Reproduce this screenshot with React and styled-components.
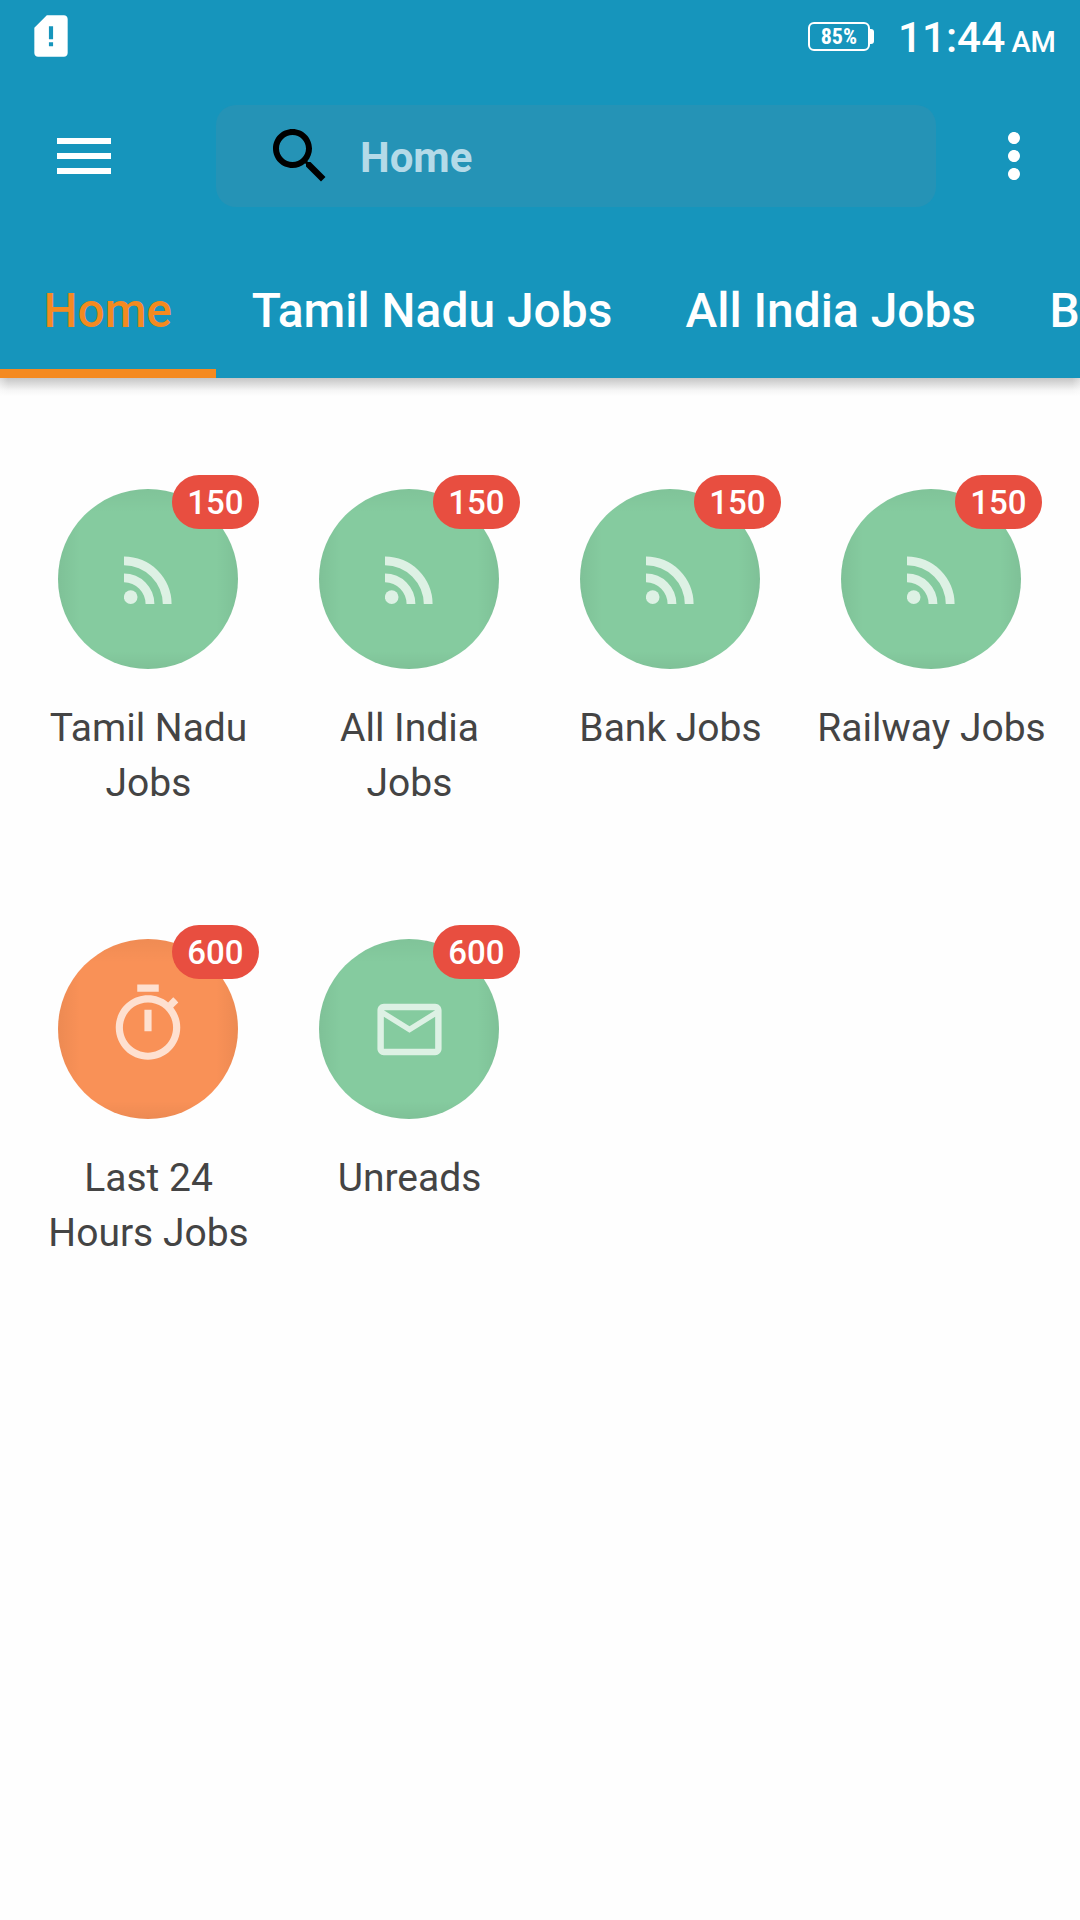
import React from 'react';
import styled, { createGlobalStyle } from 'styled-components';

const Global = createGlobalStyle`
  * { box-sizing: border-box; }
  body { margin: 0; background: #fefefe; font-family: Roboto, "Noto Sans", sans-serif; }
`;

const Screen = styled.div`
  width: 1080px;
  height: 1920px;
  overflow: hidden;
  background: #fefefe;
`;

const Header = styled.header`
  height: 378px;
  display: flex;
  flex-direction: column;
  background: #1695bc;
  color: #fff;
`;

const StatusBar = styled.div`
  height: 72px;
  padding: 0 24px 0 25.5px;
  display: flex;
  align-items: center;
  justify-content: space-between;
`;

const StatusRight = styled.div`
  display: flex;
  align-items: center;
`;

const Battery = styled.div`
  width: 62px;
  height: 29px;
  border: 2px solid #fff;
  border-radius: 6px;
  display: flex;
  align-items: center;
  justify-content: center;
  font: 700 22px/25px "Roboto Condensed", Roboto, sans-serif;
`;

const BatteryTip = styled.div`
  width: 4px;
  height: 15px;
  background: #fff;
  border-radius: 0 3px 3px 0;
`;

const Clock = styled.div`
  margin-left: 24px;
  padding-top: 8px;
  font-weight: 500;
  font-size: 42.3px;
  line-height: 68px;
  white-space: pre;
`;

const Meridiem = styled.span`
  margin-left: -1px;
  font-size: 29px;
`;

const Toolbar = styled.div`
  height: 168px;
  padding: 0 30px 0 48px;
  display: flex;
  align-items: center;
`;

const SearchField = styled.div`
  width: 720px;
  height: 102px;
  margin: 0 42px 0 96px;
  padding-left: 48px;
  border-radius: 20px;
  background: #2593b6;
  display: flex;
  align-items: center;
`;

const SearchText = styled.span`
  margin-left: 24px;
  padding-top: 2px;
  font-weight: 700;
  font-size: 42px;
  color: #b4dae8;
`;

const Tabs = styled.nav`
  flex: 1;
  display: flex;
  overflow: hidden;
`;

const Tab = styled.div`
  flex: none;
  width: ${(p) => p.$width}px;
  padding-top: 12px;
  display: flex;
  align-items: center;
  justify-content: center;
  border-bottom: 9px solid ${(p) => (p.$active ? '#f48a20' : 'transparent')};
  color: ${(p) => (p.$active ? '#f48a20' : '#fff')};
  font-weight: 500;
  font-size: 47.9px;
  white-space: nowrap;
`;

const Shadow = styled.div`
  height: 18px;
  background:
    linear-gradient(90deg, rgba(254, 254, 254, 0.4), rgba(254, 254, 254, 0) 8px, rgba(254, 254, 254, 0) 1072px, rgba(254, 254, 254, 0.4)),
    linear-gradient(#c6c6c6, #dedede 35%, #f5f5f5 68%, #fefefe);
`;

const Grid = styled.main`
  padding: 93px 0 0 17.5px;
  display: grid;
  grid-template-columns: repeat(4, 261px);
  grid-auto-rows: 450px;
`;

const Item = styled.div`
  display: flex;
  flex-direction: column;
  align-items: center;
`;

const Disc = styled.div`
  position: relative;
  width: 180px;
  height: 180px;
  padding-top: ${(p) => p.$drop || 0}px;
  padding-bottom: ${(p) => p.$lift || 0}px;
  border-radius: 50%;
  display: flex;
  align-items: center;
  justify-content: center;
  background:
    linear-gradient(90deg, rgba(0, 0, 0, 0.05), transparent 22px, transparent 158px, rgba(0, 0, 0, 0.05)),
    linear-gradient(rgba(0, 0, 0, 0.04), transparent 24px, transparent 162px, rgba(0, 0, 0, 0.05)),
    ${(p) => p.$color};
  color: rgba(255, 255, 255, 0.72);
`;

const Badge = styled.div`
  position: absolute;
  top: -14px;
  left: 114px;
  width: 87px;
  height: 54px;
  padding-top: 1px;
  border-radius: 27px;
  background: #e84e40;
  color: #fff;
  font-weight: 500;
  font-size: 33px;
  line-height: 54px;
  text-align: center;
`;

const Label = styled.div`
  width: ${(p) => p.$width}px;
  margin-top: 32px;
  padding-left: 1px;
  color: #444;
  font-size: 39px;
  line-height: 55px;
  text-align: center;
`;

const PATHS = {
  menu: 'M3 18h18v-2H3v2zm0-5h18v-2H3v2zm0-7v2h18V6H3z',
  search:
    'M15.5 14h-.79l-.28-.27C15.41 12.59 16 11.11 16 9.5 16 5.91 13.09 3 9.5 3S3 5.91 3 9.5 5.91 16 9.5 16c1.61 0 3.09-.59 4.23-1.57l.27.28v.79l5 4.99L20.49 19l-4.99-5zm-6 0C7.01 14 5 11.99 5 9.5S7.01 5 9.5 5 14 7.01 14 9.5 11.99 14 9.5 14z',
  more: 'M12 8c1.1 0 2-.9 2-2s-.9-2-2-2-2 .9-2 2 .9 2 2 2zm0 2c-1.1 0-2 .9-2 2s.9 2 2 2 2-.9 2-2-.9-2-2-2zm0 6c-1.1 0-2 .9-2 2s.9 2 2 2 2-.9 2-2-.9-2-2-2z',
  mail: 'M20 4H4c-1.1 0-1.99.9-1.99 2L2 18c0 1.1.9 2 2 2h16c1.1 0 2-.9 2-2V6c0-1.1-.9-2-2-2zm0 14H4V8l8 5 8-5v10zm-8-7L4 6h16l-8 5z',
  timer:
    'M15 1H9v2h6V1zm-4 13h2V8h-2v6zm8.03-6.61l1.42-1.42c-.43-.51-.9-.99-1.41-1.41l-1.42 1.42C16.07 4.74 14.12 4 12 4c-4.97 0-9 4.03-9 9s4.02 9 9 9 9-4.03 9-9c0-2.12-.74-4.07-1.97-5.61zM12 20c-3.87 0-7-3.13-7-7s3.13-7 7-7 7 3.13 7 7-3.13 7-7 7z',
  sim: 'M18.2 2H10L4 8v12.2c0 1 .8 1.8 1.8 1.8h12.4c1 0 1.8-.8 1.8-1.8V3.8c0-1-.8-1.8-1.8-1.8zm-5.2 14.9h-2V15h2v1.9zm0-3.4h-2V7.3h2v6.2z',
};

const Icon = ({ name, size = 72, fill = 'currentColor' }) => (
  <svg width={size} height={size} viewBox="0 0 24 24" fill={fill}>
    <path d={PATHS[name]} />
  </svg>
);

const RssIcon = () => (
  <svg width="48" height="48" viewBox="0 0 48 48" fill="currentColor">
    <circle cx="6.7" cy="41.1" r="6.8" />
    <path d="M0 0.5v8.8a38.8 38.8 0 0 1 38.8 38.7h8.8A47.6 47.6 0 0 0 0 0.5z" />
    <path d="M0 17.4v8.8a21.8 21.8 0 0 1 21.6 21.8h8.8A30.6 30.6 0 0 0 0 17.4z" />
  </svg>
);

const GREEN = '#85cb9f';
const ORANGE = '#f99157';

const ITEMS = [
  { label: 'Tamil Nadu Jobs', count: 150, icon: 'rss', color: GREEN, drop: 1, width: 220 },
  { label: 'All India Jobs', count: 150, icon: 'rss', color: GREEN, drop: 1, width: 220 },
  { label: 'Bank Jobs', count: 150, icon: 'rss', color: GREEN, drop: 1, width: 240 },
  { label: 'Railway Jobs', count: 150, icon: 'rss', color: GREEN, drop: 1, width: 240 },
  { label: 'Last 24 Hours Jobs', count: 600, icon: 'timer', color: ORANGE, size: 86, lift: 10, width: 220 },
  { label: 'Unreads', count: 600, icon: 'mail', color: GREEN, size: 77, width: 220 },
];

export default function App() {
  return (
    <Screen>
      <Global />
      <Header>
        <StatusBar>
          <Icon name="sim" size={50} />
          <StatusRight>
            <Battery>85%</Battery>
            <BatteryTip />
            <Clock>11:44<Meridiem> AM</Meridiem></Clock>
          </StatusRight>
        </StatusBar>
        <Toolbar>
          <Icon name="menu" />
          <SearchField>
            <Icon name="search" fill="#000" />
            <SearchText>Home</SearchText>
          </SearchField>
          <Icon name="more" />
        </Toolbar>
        <Tabs>
          <Tab $active $width={215.5}>Home</Tab>
          <Tab $width={433}>Tamil Nadu Jobs</Tab>
          <Tab $width={364.5}>All India Jobs</Tab>
          <Tab $width={298}>Bank Jobs</Tab>
        </Tabs>
      </Header>
      <Shadow />
      <Grid>
        {ITEMS.map((item) => (
          <Item key={item.label}>
            <Disc $color={item.color} $lift={item.lift} $drop={item.drop}>
              {item.icon === 'rss' ? <RssIcon /> : <Icon name={item.icon} size={item.size} />}
              <Badge>{item.count}</Badge>
            </Disc>
            <Label $width={item.width}>{item.label}</Label>
          </Item>
        ))}
      </Grid>
    </Screen>
  );
}
